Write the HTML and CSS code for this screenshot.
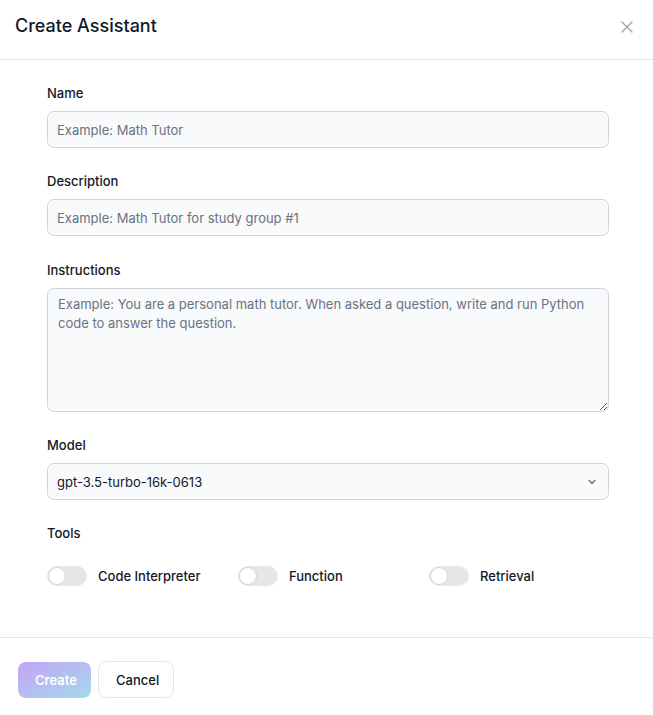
FILE: index.html
```html
<!DOCTYPE html>
<html lang="en">
<head>
<meta charset="utf-8">
<title>Create Assistant</title>
<link rel="stylesheet" href="styles.css">
</head>
<body>
<div class="modal">
  <header class="modal-header">
    <h2 class="modal-title">Create Assistant</h2>
    <button class="close-btn" aria-label="Close">
      <svg width="14" height="14" viewBox="0 0 14 14" fill="none" stroke="currentColor" stroke-width="1.4" stroke-linecap="round"><path d="M2 2L12 12M12 2L2 12"/></svg>
    </button>
  </header>
  <div class="modal-body">
    <div class="field">
      <label class="label">Name</label>
      <input class="input" type="text" placeholder="Example: Math Tutor">
    </div>
    <div class="field">
      <label class="label">Description</label>
      <input class="input" type="text" placeholder="Example: Math Tutor for study group #1">
    </div>
    <div class="field field-loose">
      <label class="label">Instructions</label>
      <textarea class="textarea" placeholder="Example: You are a personal math tutor. When asked a question, write and run Python code to answer the question."></textarea>
    </div>
    <div class="field">
      <label class="label">Model</label>
      <div class="select">
        <span>gpt-3.5-turbo-16k-0613</span>
        <svg class="chevron" width="12" height="12" viewBox="0 0 12 12" fill="none" stroke="currentColor" stroke-width="1.4" stroke-linecap="round" stroke-linejoin="round"><path d="M3 4.5L6 7.5L9 4.5"/></svg>
      </div>
    </div>
    <div class="field">
      <label class="label">Tools</label>
      <div class="tools">
        <div class="tool"><span class="switch"><span class="knob"></span></span><span class="tool-label">Code Interpreter</span></div>
        <div class="tool"><span class="switch"><span class="knob"></span></span><span class="tool-label">Function</span></div>
        <div class="tool"><span class="switch"><span class="knob"></span></span><span class="tool-label">Retrieval</span></div>
      </div>
    </div>
  </div>
  <footer class="modal-footer">
    <button class="btn btn-primary">Create</button>
    <button class="btn btn-secondary">Cancel</button>
  </footer>
</div>
</body>
</html>
```

FILE: styles.css
```css
* { box-sizing: border-box; }
html, body { margin: 0; padding: 0; background: #fff; }
body {
  font-family: Inter, "Noto Sans", sans-serif;
  color: #111827;
  font-size: 14px;
}
.modal { width: 653px; }
.modal-header {
  height: 60px;
  border-bottom: 1px solid #e5e7eb;
  display: flex;
  align-items: center;
  justify-content: space-between;
  padding: 0 19px 0 15px;
}
.modal-title {
  margin: 0;
  font-size: 18px;
  font-weight: 500;
  line-height: 28px;
  color: #111827;
  padding-bottom: 8px;
}
.close-btn {
  border: 0;
  background: none;
  padding: 0;
  color: #9ca3af;
  display: flex;
  margin-top: -6px;
}
.modal-body {
  padding: 23px 44px 51px 47px;
  display: flex;
  flex-direction: column;
  gap: 23px;
}
.field { display: flex; flex-direction: column; }
.field-loose { margin-top: 1px; }
.label {
  font-size: 13px;
  font-weight: 500;
  line-height: 20px;
  margin-bottom: 8px;
  color: #111827;
}
.input, .textarea, .select {
  width: 562px;
  border: 1px solid #d1d5db;
  border-radius: 7px;
  background: #f9fafb;
  font-family: inherit;
  font-size: 13px;
  color: #111827;
  padding: 0 9px;
  outline: none;
}
.input { height: 37px; }
.input::placeholder, .textarea::placeholder { color: #6b7280; }
.textarea {
  height: 124px;
  padding: 6px 10px;
  line-height: 19px;
  resize: vertical;
  display: block;
}
.select {
  height: 37px;
  display: flex;
  align-items: center;
  justify-content: space-between;
  padding-right: 10px;
}
.chevron { color: #6b7280; }
.tools {
  display: grid;
  grid-template-columns: repeat(3, 191px);
  margin-top: 15px;
}
.tool { display: flex; align-items: center; gap: 11px; }
.switch {
  width: 40px;
  height: 20px;
  border-radius: 10px;
  background: #e5e7eb;
  position: relative;
  flex: none;
}
.knob {
  position: absolute;
  left: 1px;
  top: 1px;
  width: 18px;
  height: 18px;
  border-radius: 50%;
  background: #fff;
  border: 1px solid #d1d5db;
}
.tool-label { font-size: 13px; font-weight: 500; color: #111827; }
.modal-footer {
  border-top: 1px solid #e5e7eb;
  padding: 23px 18px 18px;
  display: flex;
  gap: 7px;
  align-items: center;
}
.btn {
  font-family: inherit;
  font-size: 13px;
  font-weight: 600;
  height: 37px;
  border-radius: 8px;
  padding: 0 17px;
  cursor: pointer;
}
.btn-primary {
  width: 73px;
  color: #fff;
  border: 0;
  height: 36px;
  background: linear-gradient(to bottom right, #c3a4f6, #a6d9ec);
}
.btn-secondary {
  width: 76px;
  background: #fff;
  color: #111827;
  border: 1px solid #e5e7eb;
  font-weight: 500;
}
```
